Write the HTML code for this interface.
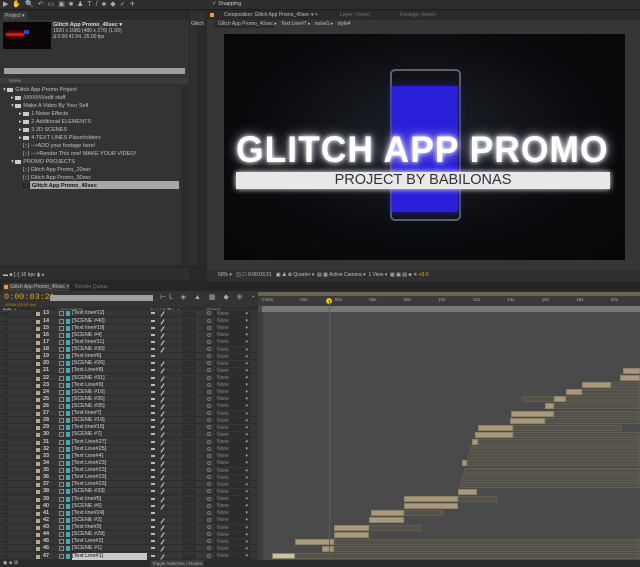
<!DOCTYPE html>
<html><head><meta charset="utf-8"><style>
*{margin:0;padding:0;box-sizing:border-box}
body{width:640px;height:567px;background:#282828;font-family:"Liberation Sans",sans-serif;color:#b8b8b8;position:relative;overflow:hidden;font-size:6px}
.a{position:absolute}
.row{position:absolute;left:0;width:640px;height:7.12px}
.row .l{position:absolute;left:0;top:0;width:258px;height:7px;background:#363636;border-bottom:1px solid #2c2c2c}
.row .l:before{content:"";position:absolute;left:2px;top:2px;width:24px;height:3px;border-left:6px solid #2e2e2e;border-right:6px solid #2e2e2e}
.row .num{position:absolute;left:43px;top:0;color:#c8c8c8;font-size:5.5px;font-weight:bold;line-height:7px}
.row .sq{position:absolute;left:36px;top:2px;width:4px;height:4px;background:#b7a887}
.row .ic{position:absolute;left:59px;top:1px;width:5px;height:5px;border:1px solid #888}
.row .ic2{position:absolute;left:66px;top:1px;width:4px;height:5px;background:#3fa9b8}
.row .nm{position:absolute;left:72px;top:0;color:#d0d0d0;font-size:5.5px;line-height:7px;white-space:nowrap}
.row .sw{position:absolute;left:151px;top:2px;width:4px;height:2px;background:#bbb}
.row .pen{position:absolute;left:162px;top:1px;width:1px;height:6px;background:#ccc;transform:rotate(35deg)}
.row .bx{position:absolute;left:180px;top:1px;width:18px;height:5px;border-left:1px solid #444;border-right:1px solid #444;background:#2f2f2f}
.row .pr{position:absolute;left:207px;top:1px;width:4px;height:4px;border:1px solid #777;border-radius:50%}
.row .dd{position:absolute;left:214px;top:0.5px;width:36px;height:6px;background:#2c2c2c;color:#888;font-size:5px;line-height:6px;padding-left:3px}
.row .dd:after{content:"▾";position:absolute;right:2px;color:#aaa}
.b{position:absolute;top:0.5px;height:6px;background:#a8997a;border:1px solid #8d8168}
.d{position:absolute;top:0.5px;height:6px;background:#555249;border:1px solid #615d52}
.pl{position:absolute;font-size:5.5px;color:#c0c0c0;white-space:nowrap}
.fold{display:inline-block;width:6px;height:4px;background:#ccc;margin-right:2px;vertical-align:middle}
</style></head><body>
<div class="a" style="left:0;top:0;width:640px;height:10px;background:#2e2e2e;border-bottom:1px solid #1e1e1e"></div>
<div class="a" style="left:3px;top:1px;width:180px;height:8px;color:#aaa;font-size:7px;letter-spacing:4px;line-height:8px">▶✋🔍↶▭▣■♟T/♣◆✓✈</div>
<div class="pl" style="left:212px;top:1px;font-size:5.5px;color:#ccc">✓ Snapping</div>
<div class="a" style="left:0;top:11px;width:189px;height:254px;background:#333"></div>
<div class="a" style="left:0;top:11px;width:189px;height:9px;background:#2a2a2a"></div>
<div class="a" style="left:3px;top:12px;width:24px;height:8px;background:#3a3a3a;font-size:5px;padding:1px 2px">Project ▾</div>
<div class="a" style="left:3px;top:22px;width:48px;height:27px;background:#0a0608"></div>
<div class="a" style="left:6px;top:33px;width:18px;height:3px;background:#d01818;box-shadow:0 0 4px #f00"></div>
<div class="a" style="left:24px;top:30px;width:5px;height:4px;background:#3040d0"></div>
<div class="pl" style="left:53px;top:22px;font-weight:bold;color:#ddd">Glitch App Promo_40sec ▾</div>
<div class="pl" style="left:53px;top:28px;font-size:5px">1920 x 1080 (480 x 270) (1.00)</div>
<div class="pl" style="left:53px;top:34px;font-size:5px">Δ 0:00:41:04, 25.00 fps</div>
<div class="a" style="left:4px;top:68px;width:181px;height:6px;background:#a0a0a0"></div>
<div class="a" style="left:0;top:78px;width:189px;height:7px;background:#3a3a3a;border-bottom:1px solid #2a2a2a"></div>
<div class="pl" style="left:9px;top:78px;font-size:4.5px;color:#999">Name</div>
<div class="a" style="left:181px;top:86px;width:7px;height:179px;background:#2c2c2c"></div>
<div class="pl" style="left:3px;top:87px">▾ <span class="fold"></span>Glitch App Promo Project</div>
<div class="pl" style="left:11px;top:95px">▸ <span class="fold"></span>//////////////edit stuff</div>
<div class="pl" style="left:11px;top:103px">▾ <span class="fold"></span>Make A Video By Your Self</div>
<div class="pl" style="left:19px;top:111px">▸ <span class="fold"></span>1.Noise Effects</div>
<div class="pl" style="left:19px;top:119px">▸ <span class="fold"></span>2.Additional ELEMENTS</div>
<div class="pl" style="left:19px;top:127px">▸ <span class="fold"></span>3.3D SCENES</div>
<div class="pl" style="left:19px;top:135px">▸ <span class="fold"></span>4.TEXT LINES Placeholders</div>
<div class="pl" style="left:23px;top:143px">[::] -->ADD your footage here!</div>
<div class="pl" style="left:23px;top:151px">[::] --->Render This one! MAKE YOUR VIDEO!</div>
<div class="pl" style="left:11px;top:159px">▾ <span class="fold"></span>PROMO PROJECTS</div>
<div class="pl" style="left:23px;top:167px">[::] Glitch App Promo_20sec</div>
<div class="pl" style="left:23px;top:175px">[::] Glitch App Promo_30sec</div>
<div class="a" style="left:30px;top:181px;width:149px;height:8px;background:#a8a8a8"></div>
<div class="pl" style="left:23px;top:183px;color:#111;font-weight:bold">[::] Glitch App Promo_40sec</div>
<div class="a" style="left:190px;top:11px;width:15px;height:254px;background:#303030"></div>
<div class="a" style="left:197px;top:26px;width:8px;height:240px;background:#2a2a2a"></div>
<div class="pl" style="left:191px;top:21px;font-size:5px">Glitch</div>
<div class="a" style="left:207px;top:11px;width:433px;height:270px;background:#363636"></div>
<div class="a" style="left:207px;top:11px;width:433px;height:9px;background:#2a2a2a"></div>
<div class="a" style="left:210px;top:13px;width:4px;height:4px;background:#e8a020"></div>
<div class="pl" style="left:224px;top:12px;font-size:5px">Composition: Glitch App Promo_40sec ▾ ×</div>
<div class="pl" style="left:340px;top:12px;font-size:5px;color:#777">Layer: (none)</div>
<div class="pl" style="left:400px;top:12px;font-size:5px;color:#777">Footage: (none)</div>
<div class="a" style="left:214px;top:21px;width:60px;height:7px;background:#2a2a2a"></div>
<div class="pl" style="left:218px;top:21px;font-size:5px">Glitch App Promo_40sec ▸ &nbsp; Text Line#7 ▸ &nbsp; noise1 ▸ &nbsp; style4</div>
<div class="a" style="left:224px;top:34px;width:401px;height:226px;background:radial-gradient(ellipse at 50% 45%,#1c2028 0%,#0a0b0e 60%,#060607 100%)"></div>
<div class="a" style="left:390px;top:69px;width:71px;height:152px;border:2px solid #5a6070;border-radius:5px;background:#101216"></div>
<div class="a" style="left:392px;top:86px;width:66px;height:126px;background:#2a1fd8;box-shadow:0 0 8px #2a20a0"></div>
<div class="a" style="left:236px;top:131px;width:400px;height:38px;font-size:37px;font-weight:bold;color:#fff;text-shadow:0 0 5px #fff,0 0 12px #ccd;letter-spacing:1px;white-space:nowrap;line-height:38px;transform:scaleX(0.96);transform-origin:left">GLITCH APP PROMO</div>
<div class="a" style="left:236px;top:172px;width:374px;height:17px;background:#e8e8ea;box-shadow:0 0 6px #fff"></div>
<div class="a" style="left:236px;top:172px;width:374px;height:17px;text-align:center;font-size:14.5px;color:#333;line-height:17px">PROJECT BY BABILONAS</div>
<div class="a" style="left:207px;top:270px;width:433px;height:11px;background:#303030"></div>
<div class="pl" style="left:218px;top:272px;font-size:5px">50% ▾ &nbsp; ◫ ☐ 0:00:03:21 &nbsp; ▣ ♟ ✿ Quarter ▾ &nbsp;▤ ▦ Active Camera ▾ &nbsp;1 View ▾ &nbsp;▦ ▣ ▤ ♣ ✳ <span style="color:#e0b020">+0.0</span></div>
<div class="a" style="left:0;top:268px;width:189px;height:12px;background:#2e2e2e"></div>
<div class="pl" style="left:3px;top:272px;font-size:5px">▬ ■ [::] 16 bpc ▮ ◂</div>
<div class="a" style="left:0;top:282px;width:640px;height:285px;background:#333"></div>
<div class="a" style="left:0;top:282px;width:640px;height:9px;background:#262626"></div>
<div class="a" style="left:3px;top:283px;width:67px;height:8px;background:#3a3a3a"></div>
<div class="a" style="left:4px;top:285px;width:4px;height:4px;background:#e8a020"></div>
<div class="pl" style="left:10px;top:284px;font-size:5px">Glitch App Promo_40sec ×</div>
<div class="pl" style="left:75px;top:284px;font-size:5px;color:#777">Render Queue</div>
<div class="pl" style="left:4px;top:292px;font-size:8.5px;color:#e0a020;font-family:'Liberation Mono',monospace">0:00:03:21</div>
<div class="pl" style="left:5px;top:302px;font-size:4px;color:#c08020">00096 (25.00 fps)</div>
<div class="a" style="left:50px;top:295px;width:103px;height:6px;background:#a0a0a0"></div>
<div class="pl" style="left:160px;top:293px;font-size:7px;color:#aaa;letter-spacing:3px">⊢L ◈ ▲ ▦ ◆ ⊕ ◔ ▣</div>
<div class="a" style="left:0;top:307px;width:258px;height:6px;background:#2e2e2e"></div>
<div class="pl" style="left:3px;top:307px;font-size:4.5px;color:#999">■◀● ▲</div>
<div class="pl" style="left:58px;top:307px;font-size:4.5px;color:#999">Layer Name</div>
<div class="pl" style="left:150px;top:307px;font-size:4.5px;color:#999">✳ ◇ \ fx ▦ ◐ ◑</div>
<div class="pl" style="left:207px;top:307px;font-size:4.5px;color:#999">Parent</div>
<div class="a" style="left:258px;top:292px;width:382px;height:275px;background:#4a4a4a"></div>
<div class="a" style="left:258px;top:292px;width:382px;height:4px;background:#6a6450"></div>
<div class="a" style="left:258px;top:296px;width:382px;height:10px;background:#3a3a3a"></div>
<div class="pl" style="left:262px;top:297px;font-size:4.5px;color:#aaa;word-spacing:26px">0:00s 02s 04s 06s 08s 10s 12s 14s 16s 18s 20s</div>
<div class="a" style="left:262px;top:306px;width:378px;height:6px;background:#777"></div>
<div class="a" style="left:258px;top:312px;width:5px;height:250px;background:#3c3c3c"></div>
<div class="a" style="left:326px;top:298px;width:6px;height:6px;border-radius:50%;background:#e8c020"></div>
<div id="rows">
<div class="row" style="top:310.4px"><div class="l"><div class="sq"></div><div class="num">13</div><div class="ic"></div><div class="ic2"></div><div class="nm">[Text line#12]</div><div class="sw"></div><div class="pen"></div><div class="bx"></div><div class="pr"></div><div class="dd">None</div></div></div>
<div class="row" style="top:317.5px"><div class="l"><div class="sq"></div><div class="num">14</div><div class="ic"></div><div class="ic2"></div><div class="nm">[SCENE #40]</div><div class="sw"></div><div class="pen"></div><div class="bx"></div><div class="pr"></div><div class="dd">None</div></div></div>
<div class="row" style="top:324.6px"><div class="l"><div class="sq"></div><div class="num">15</div><div class="ic"></div><div class="ic2"></div><div class="nm">[Text line#19]</div><div class="sw"></div><div class="pen"></div><div class="bx"></div><div class="pr"></div><div class="dd">None</div></div></div>
<div class="row" style="top:331.7px"><div class="l"><div class="sq"></div><div class="num">16</div><div class="ic"></div><div class="ic2"></div><div class="nm">[SCENE #4]</div><div class="sw"></div><div class="pen"></div><div class="bx"></div><div class="pr"></div><div class="dd">None</div></div></div>
<div class="row" style="top:338.9px"><div class="l"><div class="sq"></div><div class="num">17</div><div class="ic"></div><div class="ic2"></div><div class="nm">[Text line#11]</div><div class="sw"></div><div class="pen"></div><div class="bx"></div><div class="pr"></div><div class="dd">None</div></div></div>
<div class="row" style="top:346px"><div class="l"><div class="sq"></div><div class="num">18</div><div class="ic"></div><div class="ic2"></div><div class="nm">[SCENE #30]</div><div class="sw"></div><div class="pen"></div><div class="bx"></div><div class="pr"></div><div class="dd">None</div></div></div>
<div class="row" style="top:353.1px"><div class="l"><div class="sq"></div><div class="num">19</div><div class="ic"></div><div class="ic2"></div><div class="nm">[Text line#6]</div><div class="sw"></div><div class="bx"></div><div class="pr"></div><div class="dd">None</div></div></div>
<div class="row" style="top:360.2px"><div class="l"><div class="sq"></div><div class="num">20</div><div class="ic"></div><div class="ic2"></div><div class="nm">[SCENE #26]</div><div class="sw"></div><div class="pen"></div><div class="bx"></div><div class="pr"></div><div class="dd">None</div></div></div>
<div class="row" style="top:367.3px"><div class="l"><div class="sq"></div><div class="num">21</div><div class="ic"></div><div class="ic2"></div><div class="nm">[Text Line#8]</div><div class="sw"></div><div class="pen"></div><div class="bx"></div><div class="pr"></div><div class="dd">None</div></div><div class="b" style="left:623px;width:17px"></div></div>
<div class="row" style="top:374.5px"><div class="l"><div class="sq"></div><div class="num">22</div><div class="ic"></div><div class="ic2"></div><div class="nm">[SCENE #31]</div><div class="sw"></div><div class="pen"></div><div class="bx"></div><div class="pr"></div><div class="dd">None</div></div><div class="b" style="left:620px;width:20px"></div></div>
<div class="row" style="top:381.6px"><div class="l"><div class="sq"></div><div class="num">23</div><div class="ic"></div><div class="ic2"></div><div class="nm">[Text Line#9]</div><div class="sw"></div><div class="pen"></div><div class="bx"></div><div class="pr"></div><div class="dd">None</div></div><div class="b" style="left:582px;width:29px"></div><div class="d" style="left:611px;width:29px"></div></div>
<div class="row" style="top:388.7px"><div class="l"><div class="sq"></div><div class="num">24</div><div class="ic"></div><div class="ic2"></div><div class="nm">[SCENE #16]</div><div class="sw"></div><div class="pen"></div><div class="bx"></div><div class="pr"></div><div class="dd">None</div></div><div class="b" style="left:566px;width:16px"></div><div class="d" style="left:582px;width:58px"></div></div>
<div class="row" style="top:395.8px"><div class="l"><div class="sq"></div><div class="num">25</div><div class="ic"></div><div class="ic2"></div><div class="nm">[SCENE #35]</div><div class="sw"></div><div class="pen"></div><div class="bx"></div><div class="pr"></div><div class="dd">None</div></div><div class="d" style="left:522px;width:32px"></div><div class="b" style="left:554px;width:12px"></div><div class="d" style="left:566px;width:74px"></div></div>
<div class="row" style="top:402.9px"><div class="l"><div class="sq"></div><div class="num">26</div><div class="ic"></div><div class="ic2"></div><div class="nm">[SCENE #35]</div><div class="sw"></div><div class="pen"></div><div class="bx"></div><div class="pr"></div><div class="dd">None</div></div><div class="b" style="left:545px;width:9px"></div><div class="d" style="left:554px;width:86px"></div></div>
<div class="row" style="top:410.1px"><div class="l"><div class="sq"></div><div class="num">27</div><div class="ic"></div><div class="ic2"></div><div class="nm">[Text line#7]</div><div class="sw"></div><div class="pen"></div><div class="bx"></div><div class="pr"></div><div class="dd">None</div></div><div class="b" style="left:511px;width:43px"></div><div class="d" style="left:554px;width:86px"></div></div>
<div class="row" style="top:417.2px"><div class="l"><div class="sq"></div><div class="num">28</div><div class="ic"></div><div class="ic2"></div><div class="nm">[SCENE #19]</div><div class="sw"></div><div class="pen"></div><div class="bx"></div><div class="pr"></div><div class="dd">None</div></div><div class="b" style="left:510px;width:35px"></div><div class="d" style="left:545px;width:95px"></div></div>
<div class="row" style="top:424.3px"><div class="l"><div class="sq"></div><div class="num">29</div><div class="ic"></div><div class="ic2"></div><div class="nm">[Text line#15]</div><div class="sw"></div><div class="pen"></div><div class="bx"></div><div class="pr"></div><div class="dd">None</div></div><div class="b" style="left:478px;width:35px"></div><div class="d" style="left:513px;width:109px"></div></div>
<div class="row" style="top:431.4px"><div class="l"><div class="sq"></div><div class="num">30</div><div class="ic"></div><div class="ic2"></div><div class="nm">[SCENE #7]</div><div class="sw"></div><div class="pen"></div><div class="bx"></div><div class="pr"></div><div class="dd">None</div></div><div class="b" style="left:475px;width:38px"></div><div class="d" style="left:513px;width:127px"></div></div>
<div class="row" style="top:438.5px"><div class="l"><div class="sq"></div><div class="num">31</div><div class="ic"></div><div class="ic2"></div><div class="nm">[Text Line#27]</div><div class="sw"></div><div class="pen"></div><div class="bx"></div><div class="pr"></div><div class="dd">None</div></div><div class="b" style="left:472px;width:6px"></div><div class="d" style="left:478px;width:162px"></div></div>
<div class="row" style="top:445.7px"><div class="l"><div class="sq"></div><div class="num">32</div><div class="ic"></div><div class="ic2"></div><div class="nm">[Text Line#25]</div><div class="sw"></div><div class="pen"></div><div class="bx"></div><div class="pr"></div><div class="dd">None</div></div><div class="d" style="left:470px;width:170px"></div></div>
<div class="row" style="top:452.8px"><div class="l"><div class="sq"></div><div class="num">33</div><div class="ic"></div><div class="ic2"></div><div class="nm">[Text Line#4]</div><div class="sw"></div><div class="pen"></div><div class="bx"></div><div class="pr"></div><div class="dd">None</div></div><div class="d" style="left:468px;width:172px"></div></div>
<div class="row" style="top:459.9px"><div class="l"><div class="sq"></div><div class="num">34</div><div class="ic"></div><div class="ic2"></div><div class="nm">[Text Line#23]</div><div class="sw"></div><div class="pen"></div><div class="bx"></div><div class="pr"></div><div class="dd">None</div></div><div class="b" style="left:462px;width:5px"></div><div class="d" style="left:467px;width:173px"></div></div>
<div class="row" style="top:467px"><div class="l"><div class="sq"></div><div class="num">35</div><div class="ic"></div><div class="ic2"></div><div class="nm">[Text Line#23]</div><div class="sw"></div><div class="pen"></div><div class="bx"></div><div class="pr"></div><div class="dd">None</div></div><div class="d" style="left:464px;width:176px"></div></div>
<div class="row" style="top:474.1px"><div class="l"><div class="sq"></div><div class="num">36</div><div class="ic"></div><div class="ic2"></div><div class="nm">[Text Line#23]</div><div class="sw"></div><div class="pen"></div><div class="bx"></div><div class="pr"></div><div class="dd">None</div></div><div class="d" style="left:462px;width:178px"></div></div>
<div class="row" style="top:481.3px"><div class="l"><div class="sq"></div><div class="num">37</div><div class="ic"></div><div class="ic2"></div><div class="nm">[Text Line#23]</div><div class="sw"></div><div class="pen"></div><div class="bx"></div><div class="pr"></div><div class="dd">None</div></div><div class="d" style="left:460px;width:180px"></div></div>
<div class="row" style="top:488.4px"><div class="l"><div class="sq"></div><div class="num">38</div><div class="ic"></div><div class="ic2"></div><div class="nm">[SCENE #33]</div><div class="sw"></div><div class="pen"></div><div class="bx"></div><div class="pr"></div><div class="dd">None</div></div><div class="b" style="left:458px;width:19px"></div></div>
<div class="row" style="top:495.5px"><div class="l"><div class="sq"></div><div class="num">39</div><div class="ic"></div><div class="ic2"></div><div class="nm">[Text line#5]</div><div class="sw"></div><div class="pen"></div><div class="bx"></div><div class="pr"></div><div class="dd">None</div></div><div class="b" style="left:404px;width:54px"></div><div class="d" style="left:458px;width:39px"></div></div>
<div class="row" style="top:502.6px"><div class="l"><div class="sq"></div><div class="num">40</div><div class="ic"></div><div class="ic2"></div><div class="nm">[SCENE #6]</div><div class="sw"></div><div class="pen"></div><div class="bx"></div><div class="pr"></div><div class="dd">None</div></div><div class="b" style="left:404px;width:54px"></div></div>
<div class="row" style="top:509.7px"><div class="l"><div class="sq"></div><div class="num">41</div><div class="ic"></div><div class="ic2"></div><div class="nm">[Text line#24]</div><div class="sw"></div><div class="bx"></div><div class="pr"></div><div class="dd">None</div></div><div class="b" style="left:371px;width:33px"></div><div class="d" style="left:404px;width:40px"></div></div>
<div class="row" style="top:516.9px"><div class="l"><div class="sq"></div><div class="num">42</div><div class="ic"></div><div class="ic2"></div><div class="nm">[SCENE #2]</div><div class="sw"></div><div class="pen"></div><div class="bx"></div><div class="pr"></div><div class="dd">None</div></div><div class="b" style="left:369px;width:35px"></div></div>
<div class="row" style="top:524px"><div class="l"><div class="sq"></div><div class="num">43</div><div class="ic"></div><div class="ic2"></div><div class="nm">[Text line#3]</div><div class="sw"></div><div class="pen"></div><div class="bx"></div><div class="pr"></div><div class="dd">None</div></div><div class="b" style="left:334px;width:35px"></div><div class="d" style="left:369px;width:52px"></div></div>
<div class="row" style="top:531.1px"><div class="l"><div class="sq"></div><div class="num">44</div><div class="ic"></div><div class="ic2"></div><div class="nm">[SCENE #29]</div><div class="sw"></div><div class="pen"></div><div class="bx"></div><div class="pr"></div><div class="dd">None</div></div><div class="b" style="left:334px;width:35px"></div></div>
<div class="row" style="top:538.2px"><div class="l"><div class="sq"></div><div class="num">45</div><div class="ic"></div><div class="ic2"></div><div class="nm">[Text Line#2]</div><div class="sw"></div><div class="pen"></div><div class="bx"></div><div class="pr"></div><div class="dd">None</div></div><div class="b" style="left:295px;width:39px"></div><div class="d" style="left:334px;width:306px"></div></div>
<div class="row" style="top:545.3px"><div class="l"><div class="sq"></div><div class="num">46</div><div class="ic"></div><div class="ic2"></div><div class="nm">[SCENE #1]</div><div class="sw"></div><div class="pen"></div><div class="bx"></div><div class="pr"></div><div class="dd">None</div></div><div class="b" style="left:322px;width:12px"></div><div class="d" style="left:334px;width:306px"></div></div>
<div class="row" style="top:552.5px"><div class="l"><div class="sq"></div><div class="num">47</div><div class="ic"></div><div class="ic2"></div><div class="nm" style="background:#c8c8c8;color:#111;width:75px">[Text Line#1]</div><div class="sw"></div><div class="pen"></div><div class="bx"></div><div class="pr"></div><div class="dd">None</div></div><div class="b" style="left:272px;width:23px;background:#cfc2a0"></div><div class="d" style="left:295px;width:345px"></div></div>
</div>
<div class="a" style="left:328.5px;top:300px;width:1px;height:262px;background:#c83020"></div>
<div class="a" style="left:0;top:560px;width:640px;height:7px;background:#2a2a2a"></div>
<div class="a" style="left:150px;top:560px;width:54px;height:7px;background:#3a3a3a;font-size:4.5px;color:#aaa;text-align:center;line-height:7px">Toggle Switches / Modes</div>
<div class="pl" style="left:3px;top:560px;font-size:5px">◉ ◈ ⊞</div>
</body></html>
